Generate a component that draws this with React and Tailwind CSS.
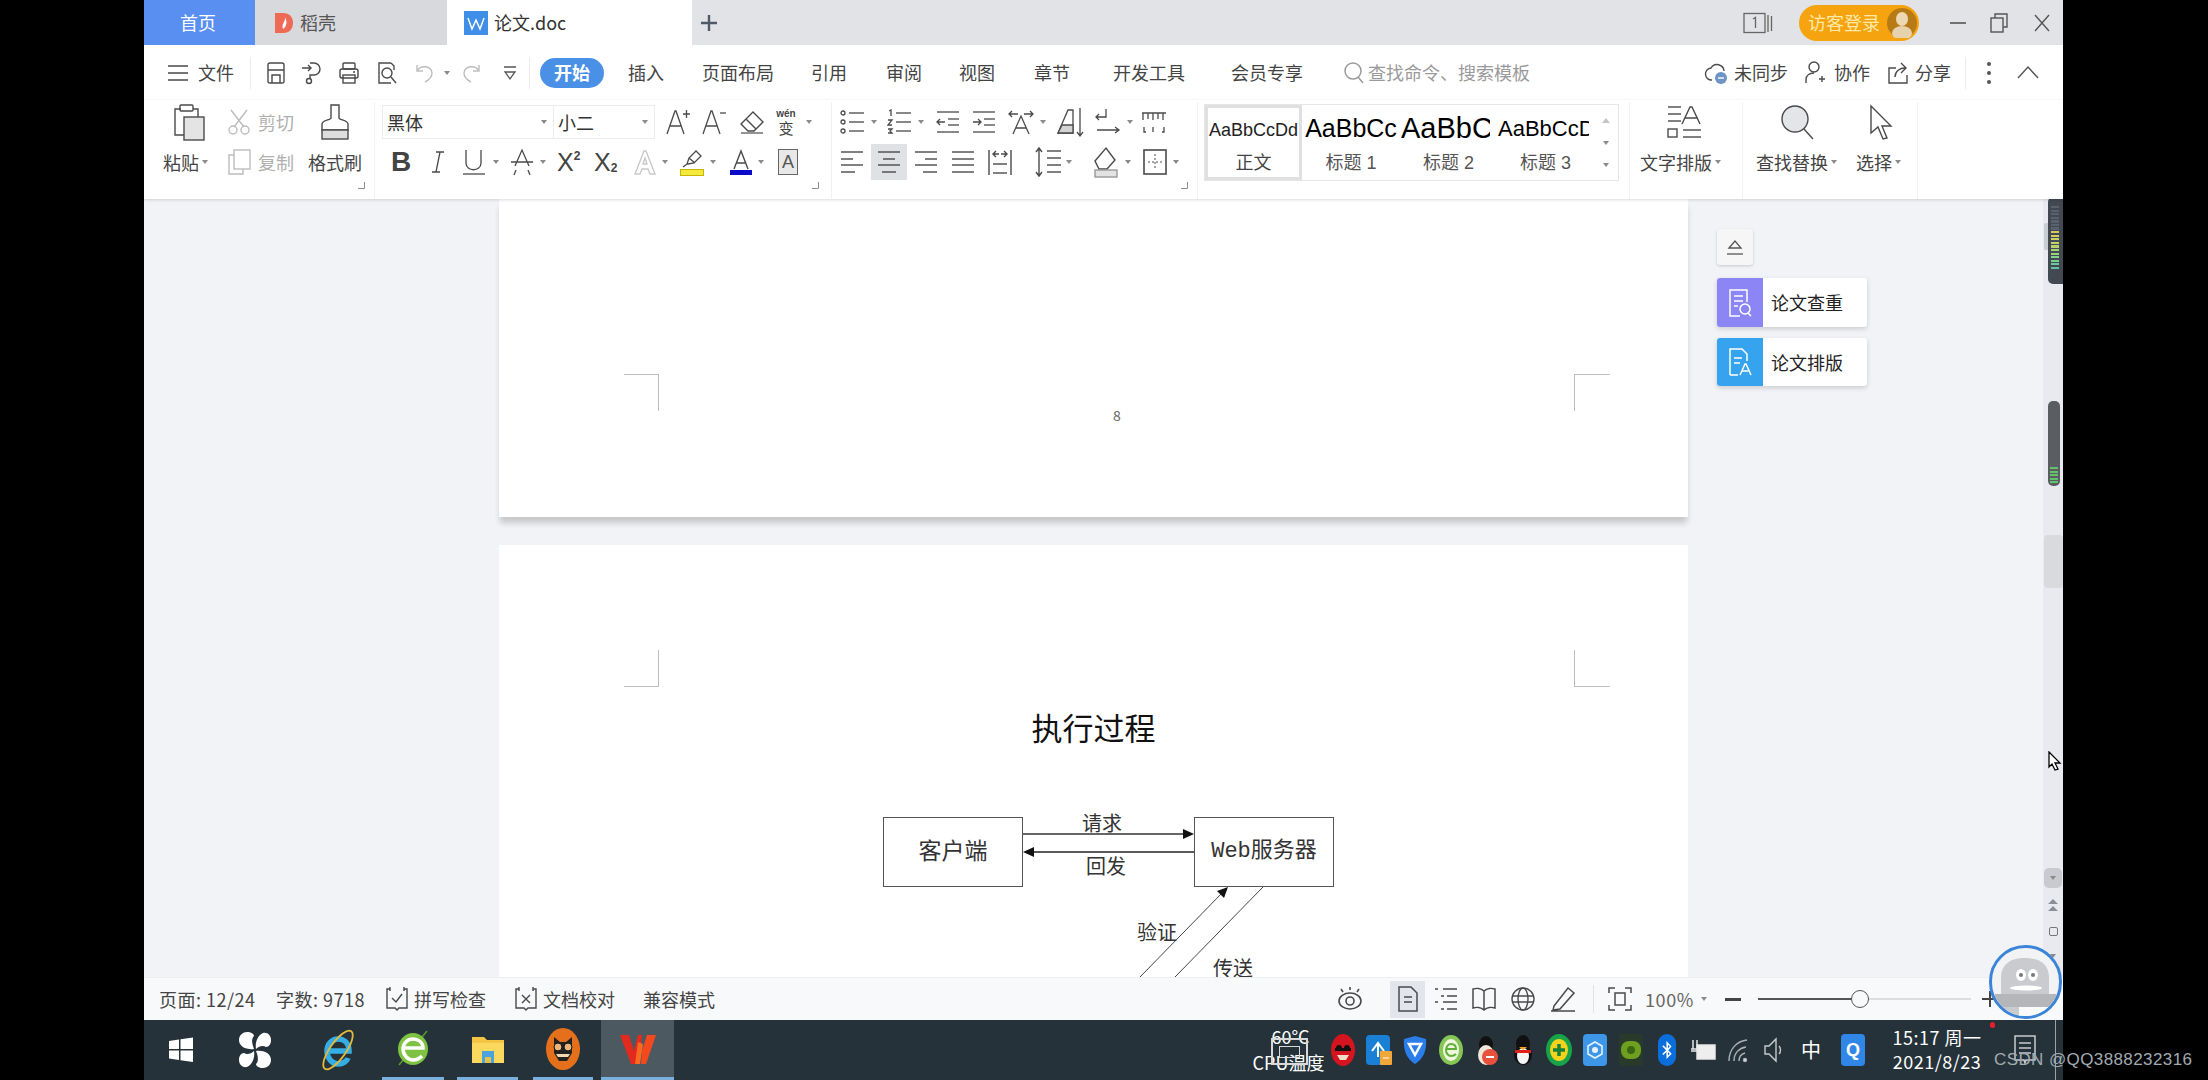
import React from 'react';
import { FaBluetoothB } from 'react-icons/fa';

function S({ w = 24, h = 24, sw = 1.4, stroke = '#4a4a4a', fill = 'none', className = '', children }) {
  return (
    <svg width={w} height={h} viewBox={`0 0 ${w} ${h}`} fill={fill} stroke={stroke} strokeWidth={sw} className={'shrink-0 ' + className}>
      {children}
    </svg>
  );
}
const Caret = ({ className = '' }) => (
  <span className={"h-0 w-0 shrink-0 border-x-[3.5px] border-t-[4px] border-x-transparent border-t-[#8a8a8a] " + className} />
);
const Corner = ({ className = '' }) => (
  <S w={7} h={7} sw={1} stroke="#8f8f8f" className={'absolute ' + className}><path d="M6.5 0v6.5H0" /></S>
);
const Lines = ({ rows }) => <>{rows.map((r, i) => <path key={i} d={r} />)}</>;

const meterTop = ['#59616e', '#59616e', '#59616e', '#59616e', '#59616e', '#59616e', '#59616e'];
const meterLevels = ['#d9c95a', '#d6cc5c', '#cfcf60', '#c6d166', '#b8d16c', '#a8d174', '#98d07e', '#88cf88', '#78cb92', '#6cc69c', '#64c0a4'];
const meterLow = ['#5fc46a', '#5fc46a', '#5fc46a', '#5fc46a', '#5fc46a'];

function App() {
  return (
    <div className="relative flex h-[1080px] w-[2208px] overflow-hidden bg-black font-['Noto_Sans_CJK_SC',sans-serif] text-[18px] text-[#444]">
      <div className="w-[144px] shrink-0" />
      <div className="flex w-[1919px] shrink-0 flex-col">
        {/* tabs */}
        <div className="flex h-[45px] shrink-0 items-center bg-[#e2e3e6]">
          <div className="flex h-full w-[111px] items-center justify-center bg-[#5a8ff2] pr-[3px] text-white">首页</div>
          <div className="flex h-full w-[192px] items-center bg-[#d8d9dc] pl-[19px] text-[#555]">
            <svg width="20" height="22" viewBox="0 0 20 22"><path d="M1 1h8c8 0 10 6 10 10s-2 10-10 10H1z" fill="#ee6a55" /><path d="M11 5c1 4-4 7-2 12 3-2 5-6 2-12z" fill="#fff" /></svg>
            <span className="ml-[6px]">稻壳</span>
          </div>
          <div className="flex h-full w-[245px] items-center bg-white pl-[17px] text-[#333]">
            <svg width="24" height="24" viewBox="0 0 24 24"><rect width="24" height="24" fill="#3f8fe8" /><path d="M4 7l4 11 4-9 4 9 4-11" fill="none" stroke="#fff" strokeWidth="1.5" /></svg>
            <span className="ml-[6px]">论文.doc</span>
          </div>
          <S w={20} h={20} sw={2.4} stroke="#4f5a68" className="ml-[7px]"><path d="M10 2v16M2 10h16" /></S>
          <div className="ml-auto flex items-center pr-[13px]">
            <S w={30} h={22} sw={1.3} stroke="#666"><rect x="1" y="1.5" width="21" height="19" /><path d="M25 3v17M28.5 4v15" /><path d="M10 7l2.5-1.5V16" /></S>
            <div className="ml-[26px] flex h-[36px] w-[120px] items-center rounded-[18px] bg-[#f5a30e] pl-[9px] text-[#ffe9a8]">
              <span className="whitespace-nowrap">访客登录</span>
              <svg width="30" height="30" viewBox="0 0 30 30" className="ml-[7px]"><circle cx="15" cy="15" r="15" fill="#b87a14" /><ellipse cx="15" cy="11" rx="6" ry="7" fill="#ecd9b4" /><ellipse cx="15" cy="25" rx="10" ry="7" fill="#e6d2ac" /></svg>
            </div>
            <S w={16} h={4} sw={1.6} stroke="#555" className="ml-[31px]"><path d="M0 2h16" /></S>
            <S w={18} h={20} sw={1.4} stroke="#555" className="ml-[24px]"><rect x="1" y="5" width="12" height="14" /><path d="M5 5V1h12v13h-4" /></S>
            <S w={16} h={18} sw={1.4} stroke="#555" className="ml-[26px]"><path d="M1 1l14 16M15 1L1 17" /></S>
          </div>
        </div>
        {/* menu row */}
        <div className="flex h-[55px] shrink-0 items-center whitespace-nowrap bg-white">
          <S w={22} h={18} sw={1.6} className="ml-[23px]"><path d="M1 2h20M1 9h20M1 16h20" /></S>
          <span className="ml-[9px] w-[36px]">文件</span>
          <span className="ml-[16px] h-[32px] w-px bg-[#ececec]" />
          <S w={22} h={24} className="ml-[14px]"><path d="M3 4q0-2 2-2h12q2 0 2 2v17q0 1-2 1H5q-2 0-2-1z" /><path d="M7 22v-8h8v8M3 9h16" /></S>
          <S w={22} h={24} className="ml-[14px]"><path d="M1 7h9M7 4l3 3-3 3" /><path d="M9 2h4a6 6 0 0 1 0 12h-4v4" /><circle cx="8" cy="20" r="2.5" /></S>
          <S w={22} h={24} className="ml-[15px]"><rect x="5" y="2" width="12" height="6" rx="1" /><rect x="2" y="8" width="18" height="9" rx="2" /><rect x="5" y="14" width="12" height="8" /><path d="M15 11h2" /></S>
          <S w={22} h={24} className="ml-[16px]"><path d="M15 2H3v20h12" /><path d="M15 2l3 3v4" /><circle cx="11" cy="12" r="5" /><path d="M15 16l5 6" /></S>
          <S w={20} h={22} stroke="#bdbdbd" className="ml-[16px]"><path d="M3 9c3-6 14-6 15 2 0 4-3 7-7 9M3 3v6h6" /></S>
          <Caret className="ml-[10px]" />
          <S w={20} h={22} stroke="#bdbdbd" className="ml-[12px]"><path d="M17 9C14 3 3 3 2 11c0 4 3 7 7 9M17 3v6h-6" /></S>
          <S w={14} h={18} sw={1.3} stroke="#555" className="ml-[21px]"><path d="M1 3h12M2 8h10l-5 7z" /></S>
          <span className="ml-[12px] h-[32px] w-px bg-[#ececec]" />
          <span className="ml-[10px] flex h-[30px] w-[64px] items-center justify-center rounded-[15px] bg-[#4a90e6] font-bold text-white">开始</span>
          <span className="ml-[24px]">插入</span>
          <span className="ml-[38px]">页面布局</span>
          <span className="ml-[37px]">引用</span>
          <span className="ml-[39px]">审阅</span>
          <span className="ml-[37px]">视图</span>
          <span className="ml-[39px]">章节</span>
          <span className="ml-[43px]">开发工具</span>
          <span className="ml-[46px]">会员专享</span>
          <S w={20} h={24} stroke="#9a9a9a" sw={1.5} className="ml-[41px]"><circle cx="9" cy="10" r="8" /><path d="M14 16l5 6" /></S>
          <span className="ml-[4px] w-[162px] text-[#9a9a9a]">查找命令、搜索模板</span>
          <S w={24} h={24} className="ml-[174px]"><path d="M8 19a6 6 0 0 1-1-12 7 7 0 0 1 13 3" /><circle cx="17" cy="17" r="6" fill="#6d94c4" stroke="none" /><path d="M14 17h6" stroke="#fff" /></S>
          <span className="ml-[6px] w-[54px]">未同步</span>
          <S w={20} h={24} className="ml-[17px]"><circle cx="9" cy="6" r="5" /><path d="M1 22v-3c0-5 4-7 8-7M14 18h6M17 15v6" /></S>
          <span className="ml-[9px] w-[36px]">协作</span>
          <S w={22} h={24} className="ml-[17px]"><path d="M9 7H2v15h18v-8" /><path d="M8 16c0-6 5-9 10-9M14 2l5 5-5 5" /></S>
          <span className="ml-[6px] w-[36px]">分享</span>
          <span className="ml-[14px] h-[32px] w-px bg-[#ececec]" />
          <S w={4} h={24} stroke="none" fill="#555" className="ml-[21px]"><circle cx="2" cy="3" r="2" /><circle cx="2" cy="12" r="2" /><circle cx="2" cy="21" r="2" /></S>
          <S w={22} h={13} sw={1.4} stroke="#555" className="ml-[26px]"><path d="M1 12L11 1l10 11" /></S>
        </div>
        {/* toolbar */}
        <div className="z-10 flex h-[99px] shrink-0 whitespace-nowrap bg-white pt-[2px] shadow-[0_1px_3px_rgba(0,0,0,0.15)]">
          {/* clipboard */}
          <div className="relative flex w-[231px] shrink-0 border-r border-[#f1f1f1] pl-[19px]">
            <div className="w-[48px]">
              <div className="flex h-[40px] items-center pl-[9px]">
                <S w={34} h={38} sw={1.4}><path d="M9 6H3v26h9M21 6h5v8" /><rect x="8" y="2" width="13" height="6" rx="1" /><rect x="12" y="14" width="20" height="23" fill="#e4e4e4" /></S>
              </div>
              <div className="flex h-[40px] items-center">粘贴<Caret className="ml-[3px]" /></div>
            </div>
            <div className="ml-[16px] w-[67px] text-[#b0b0b0]">
              <div className="flex h-[40px] items-center">
                <S w={24} h={26} stroke="#bcbcbc"><path d="M4 1l13 17M20 1L7 18" /><circle cx="6" cy="21" r="4" /><circle cx="18" cy="21" r="4" /></S>
                <span className="ml-[7px]">剪切</span>
              </div>
              <div className="flex h-[40px] items-center">
                <S w={24} h={26} stroke="#bcbcbc"><rect x="7" y="1" width="16" height="19" /><path d="M7 6H2v19h14v-5" /></S>
                <span className="ml-[7px]">复制</span>
              </div>
            </div>
            <div className="ml-[14px] w-[54px]">
              <div className="flex h-[40px] items-center justify-center">
                <S w={28} h={36} sw={1.4}><path d="M10 1h8v13c0 2 9 2 9 6v6H1v-6c0-4 9-4 9-6z" /><rect x="1" y="26" width="26" height="9" fill="#dedede" /></S>
              </div>
              <div className="flex h-[40px] items-center">格式刷</div>
            </div>
            <Corner className="bottom-[10px] right-[9px]" />
          </div>
          {/* font */}
          <div className="relative w-[457px] shrink-0 border-r border-[#f1f1f1] pl-[7px]">
            <div className="flex h-[40px] items-center">
              <div className="flex h-[34px] w-[273px] items-center border border-[#ececec] bg-white">
                <div className="flex h-full w-[171px] items-center justify-between border-r border-[#ececec] pl-[4px] pr-[6px] text-[#333]">黑体<Caret /></div>
                <div className="flex h-full flex-1 items-center justify-between pl-[4px] pr-[6px] text-[#333]">小二<Caret /></div>
              </div>
              <S w={26} h={28} sw={1.3} className="ml-[10px]"><path d="M2 26L10 3h1l8 23M5 18h11" /><path d="M18 6h7M21.5 2v8" /></S>
              <S w={26} h={28} sw={1.3} className="ml-[10px]"><path d="M2 26L10 3h1l8 23M5 18h11" /><path d="M19 5h6" /></S>
              <S w={26} h={24} sw={1.4} className="ml-[12px]"><path d="M2 14L14 2l10 10-9 9H9z" /><path d="M7 9l10 10" /><path d="M2 23h22" stroke="#666" /></S>
              <div className="ml-[9px] flex h-[32px] w-[24px] flex-col items-center justify-center">
                <span className="font-['Liberation_Sans',sans-serif] text-[10px] font-bold leading-[10px]">wén</span>
                <span className="mt-[2px] text-[15px] leading-[14px]">变</span>
              </div>
              <Caret className="ml-[8px]" />
            </div>
            <div className="flex h-[40px] items-center">
              <span className="ml-[8px] w-[22px] text-center font-['Liberation_Sans',sans-serif] text-[28px] font-bold">B</span>
              <S w={14} h={24} sw={1.3} className="ml-[19px]"><path d="M5 2h8M1 22h8M9 2L5 22" /></S>
              <S w={22} h={28} sw={1.3} className="ml-[18px]"><path d="M3 2v13c0 9 15 9 15 0V2" /><path d="M0 26h22" /></S>
              <Caret className="ml-[8px]" />
              <S w={24} h={28} sw={1.3} className="ml-[11px]"><path d="M5 18L12 2l7 16M1 14h22M4 27l2-5M20 27l-2-5" /></S>
              <Caret className="ml-[6px]" />
              <span className="ml-[11px] flex w-[26px] items-start font-['Liberation_Sans',sans-serif] text-[25px] font-light leading-[26px]">X<span className="text-[12px] font-bold leading-[14px]">2</span></span>
              <span className="ml-[11px] flex w-[26px] items-end font-['Liberation_Sans',sans-serif] text-[25px] font-light leading-[26px]">X<span className="text-[12px] font-bold leading-[14px]">2</span></span>
              <S w={24} h={26} sw={1.4} stroke="#c9c9c9" className="ml-[13px]"><path d="M2 25L11 2h2l9 23h-5l-2-5H9l-2 5zM10 15h4l-2-6z" /></S>
              <Caret className="ml-[5px]" />
              <div className="ml-[12px] flex w-[24px] flex-col items-center">
                <S w={22} h={20} sw={1.3}><path d="M6 15l2-6L15 2l5 5-7 7-6 1zM8 9l6 5M2 18l4-3" /></S>
                <span className="h-[7px] w-[24px] border border-[#c8b400] bg-[#f3ea3d]" />
              </div>
              <Caret className="ml-[6px]" />
              <div className="ml-[14px] flex w-[22px] flex-col items-center">
                <S w={20} h={21} sw={1.4}><path d="M3 20L10 2l7 18M5 14h10" /></S>
                <span className="h-[5px] w-[22px] bg-[#0a0ac8]" />
              </div>
              <Caret className="ml-[6px]" />
              <div className="ml-[14px] flex h-[26px] w-[20px] items-center justify-center border border-[#666] bg-[#e8e8e8] font-['Liberation_Sans',sans-serif] text-[18px] leading-none text-[#555]">A</div>
            </div>
            <Corner className="bottom-[10px] right-[12px]" />
          </div>
          {/* paragraph */}
          <div className="relative w-[366px] shrink-0 border-r border-[#f1f1f1]">
            <div className="flex h-[40px] items-center">
              <S w={24} h={26} sw={1.3} className="ml-[8px]"><Lines rows={['M9 4h15', 'M9 13h15', 'M9 22h15']} /><circle cx="3" cy="4" r="2" /><circle cx="3" cy="13" r="2" /><circle cx="3" cy="22" r="2" /></S>
              <Caret className="ml-[7px]" />
              <S w={24} h={26} sw={1.3} className="ml-[10px]"><Lines rows={['M9 4h15', 'M9 13h15', 'M9 22h15', 'M2 2l2-1v6', 'M1 11h4l-4 5h4', 'M1 20h4l-2 2 2 2H1']} /></S>
              <Caret className="ml-[7px]" />
              <S w={24} h={26} sw={1.3} className="ml-[12px]"><Lines rows={['M1 3h22', 'M12 10h11', 'M12 16h11', 'M1 23h22', 'M1 13h8M4 10l-3 3 3 3']} /></S>
              <S w={24} h={26} sw={1.3} className="ml-[12px]"><Lines rows={['M1 3h22', 'M12 10h11', 'M12 16h11', 'M1 23h22', 'M1 13h8M6 10l3 3-3 3']} /></S>
              <S w={26} h={28} sw={1.3} className="ml-[12px]"><Lines rows={['M1 6h9M4 3L1 6l3 3', 'M16 6h9M22 3l3 3-3 3', 'M5 26l8-18 8 18M8 20h10']} /></S>
              <Caret className="ml-[6px]" />
              <S w={28} h={32} sw={1.3} className="ml-[10px]"><path d="M2 27L12 4h5v23H2z" /><path d="M2 27l4-8h11v8z" fill="#d3d3d3" /><path d="M24 2v28M21 26l3 4 3-4" /></S>
              <S w={26} h={28} sw={1.3} className="ml-[11px]"><Lines rows={['M11 1v8H1M4 6L1 9l3 3', 'M2 22h21M20 19l4 3-4 3']} /></S>
              <Caret className="ml-[6px]" />
              <S w={26} h={26} sw={1.3} className="ml-[8px]"><Lines rows={['M1 4h24M2 4v7M7 4v6M12 4v7M17 4v6M22 4v7', 'M3 18v5h2M12 18v5M23 18v5h-2']} /></S>
            </div>
            <div className="flex h-[40px] items-center">
              <S w={24} h={26} sw={1.4} className="ml-[8px]"><Lines rows={['M1 3h22', 'M1 10h12', 'M1 16h22', 'M1 23h14']} /></S>
              <div className="ml-[7px] flex h-[36px] w-[36px] items-center justify-center bg-[#dfe1e5]">
                <S w={24} h={26} sw={1.4}><Lines rows={['M1 3h22', 'M6 10h12', 'M1 16h22', 'M5 23h14']} /></S>
              </div>
              <S w={24} h={26} sw={1.4} className="ml-[7px]"><Lines rows={['M1 3h22', 'M11 10h12', 'M1 16h22', 'M9 23h14']} /></S>
              <S w={24} h={26} sw={1.4} className="ml-[13px]"><Lines rows={['M1 3h22', 'M1 10h22', 'M1 16h22', 'M1 23h22']} /></S>
              <S w={24} h={28} sw={1.4} className="ml-[13px]"><Lines rows={['M1 2v25M23 2v25', 'M5 16h14', 'M5 25h14', 'M5 6h6M8 3L5 6l3 3', 'M13 6h6M16 3l3 3-3 3']} /></S>
              <S w={26} h={32} sw={1.4} className="ml-[23px]"><Lines rows={['M4 2v28M1 6l3-4 3 4M1 26l3 4 3-4', 'M12 5h14', 'M12 12h14', 'M12 19h14', 'M12 26h14']} /></S>
              <Caret className="ml-[5px]" />
              <S w={26} h={32} sw={1.4} className="ml-[21px]"><path d="M2 15L13 2l9 12-8 9H6z" /><rect x="2" y="24" width="22" height="7" fill="#e2e2e2" stroke="#999" /></S>
              <Caret className="ml-[6px]" />
              <S w={24} h={28} sw={1.6} className="ml-[12px]"><rect x="1" y="2" width="22" height="24" /><path d="M12 6v16M5 14h14" strokeDasharray="2 2" strokeWidth="1" /></S>
              <Caret className="ml-[6px]" />
            </div>
            <Corner className="bottom-[10px] right-[9px]" />
          </div>
          {/* gallery */}
          <div className="ml-[6px] mt-[2px] flex h-[77px] w-[415px] shrink-0 border border-[#e6e6e6] font-['Liberation_Sans','Noto_Sans_CJK_SC',sans-serif]">
            <div className="flex h-full w-[97px] flex-col items-center border-[3px] border-[#e0e0e0] text-[#222]">
              <div className="flex h-[42px] w-full items-center justify-center overflow-hidden pt-[3px] text-[18px]">AaBbCcDd</div>
              <div className="text-[#444]">正文</div>
            </div>
            <div className="flex h-full w-[98px] flex-col items-center">
              <div className="flex h-[45px] w-full items-center justify-center overflow-hidden pt-[2px] text-[25px] text-black">AaBbCc</div>
              <div className="text-[#555]">标题 1</div>
            </div>
            <div className="flex h-full w-[97px] flex-col items-center">
              <div className="flex h-[45px] w-[90px] items-center self-start overflow-hidden pl-[1px] pt-[2px] text-[29px] text-black">AaBbCc</div>
              <div className="text-[#555]">标题 2</div>
            </div>
            <div className="flex h-full w-[97px] flex-col items-center">
              <div className="flex h-[45px] w-[92px] items-center self-start overflow-hidden pl-[1px] pt-[2px] text-[22px] text-black">AaBbCcDd</div>
              <div className="text-[#555]">标题 3</div>
            </div>
            <div className="flex flex-1 flex-col items-center justify-around py-[4px]">
              <span className="h-0 w-0 border-x-[4px] border-b-[5px] border-x-transparent border-b-[#c4c4c4]" />
              <Caret />
              <Caret />
            </div>
          </div>
          {/* text layout */}
          <div className="ml-[10px] w-[114px] shrink-0 border-x border-[#f1f1f1]">
            <div className="flex h-[40px] items-center pl-[37px]">
              <S w={36} h={34} sw={1.4}><Lines rows={['M1 2h13', 'M1 9h13', 'M1 16h13', 'M15 19L23 2h2l8 17M18 13h12', 'M16 25h18', 'M16 32h18']} /><rect x="1" y="24" width="9" height="8" /></S>
            </div>
            <div className="flex h-[40px] items-center pl-[10px]">文字排版<Caret className="ml-[3px]" /></div>
          </div>
          <div className="w-[102px] shrink-0">
            <div className="flex h-[40px] items-center pl-[37px]">
              <S w={36} h={36} sw={1.4}><circle cx="15" cy="15" r="13" fill="#e4e5e8" /><path d="M24 25l9 10" /></S>
            </div>
            <div className="flex h-[40px] items-center pl-[13px]">查找替换<Caret className="ml-[3px]" /></div>
          </div>
          <div className="w-[73px] shrink-0 border-r border-[#f1f1f1]">
            <div className="flex h-[40px] items-center pl-[24px]">
              <S w={24} h={36} sw={1.4}><path d="M2 2l20 20h-9l5 12-4 1-5-12-7 6z" /></S>
            </div>
            <div className="flex h-[40px] items-center pl-[11px]">选择<Caret className="ml-[3px]" /></div>
          </div>
        </div>
        {/* document */}
        <div className="flex min-h-0 flex-1 overflow-hidden bg-[#f2f3f6]">
          <div className="w-[355px] shrink-0" />
          <div className="flex w-[1189px] shrink-0 flex-col gap-[28px]">
            <div className="relative h-[318px] shrink-0 bg-white shadow-[0_7px_6px_-1px_rgba(0,0,0,0.18)]">
              <div className="absolute left-[125px] top-[175px] h-[37px] w-[35px] border-r border-t border-[#bdbdbd]" />
              <div className="absolute left-[1075px] top-[175px] h-[37px] w-[36px] border-l border-t border-[#bdbdbd]" />
              <div className="absolute left-[614px] top-[205px] text-[14px] leading-[22px] text-[#666]">8</div>
            </div>
            <div className="relative min-h-0 flex-1 overflow-hidden bg-white pt-[159px]">
              <div className="absolute left-[125px] top-[105px] h-[37px] w-[35px] border-b border-r border-[#bdbdbd]" />
              <div className="absolute left-[1075px] top-[105px] h-[37px] w-[36px] border-b border-l border-[#bdbdbd]" />
              <div className="text-center text-[31px] leading-[46px] text-[#111]">执行过程</div>
              <div className="relative mt-[50px] h-[177px] text-[#333]">
                <svg width="1189" height="177" viewBox="0 0 1189 177" className="absolute left-0 top-0">
                  <path d="M524 34h161" stroke="#666" strokeWidth="2" />
                  <path d="M695 34l-11-5v10z" fill="#111" />
                  <path d="M695 52H535" stroke="#222" strokeWidth="1.3" />
                  <path d="M524 52l11-5v10z" fill="#111" />
                  <path d="M641 177l83-85" stroke="#444" strokeWidth="1" />
                  <path d="M729 87l-11 4 7 7z" fill="#111" />
                  <path d="M676 177l88-90" stroke="#444" strokeWidth="1" />
                </svg>
                <div className="absolute left-[384px] top-[17px] flex h-[70px] w-[140px] items-center justify-center border border-[#555] pb-[5px] text-[23px]">客户端</div>
                <div className="absolute left-[695px] top-[17px] flex h-[70px] w-[140px] items-center justify-center border border-[#555] pb-[1px] font-['Liberation_Mono','Noto_Sans_CJK_SC',monospace] text-[22px]">Web服务器</div>
                <div className="absolute left-[583px] top-[10px] text-[20px] leading-[26px]">请求</div>
                <div className="absolute left-[587px] top-[53px] text-[20px] leading-[26px]">回发</div>
                <div className="absolute left-[638px] top-[119px] text-[20px] leading-[26px]">验证</div>
                <div className="absolute left-[714px] top-[155px] text-[20px] leading-[26px]">传送</div>
              </div>
            </div>
          </div>
          {/* right panel */}
          <div className="w-[355px] shrink-0 pl-[29px] pt-[30px]">
            <div className="flex h-[36px] w-[36px] items-center justify-center rounded-[3px] bg-[#f6f6f7] shadow-[0_1px_3px_rgba(0,0,0,0.18)]">
              <S w={18} h={18} sw={1.3} stroke="#555"><path d="M3 10l6-7 6 7z" /><path d="M1 16h16" /></S>
            </div>
            <div className="mt-[13px] flex h-[49px] w-[150px] overflow-hidden rounded-[3px] bg-white shadow-[0_2px_5px_rgba(0,0,0,0.16)]">
              <div className="flex w-[46px] items-center justify-center bg-[#8c85f6]">
                <S w={26} h={30} sw={1.5} stroke="#fff"><path d="M20 14V2H3v26h10" /><path d="M7 8h9M7 13h9M7 18h4" /><circle cx="18" cy="21" r="5" /><path d="M21 25l3 3" /></S>
              </div>
              <span className="ml-[8px] flex items-center text-[#222]">论文查重</span>
            </div>
            <div className="mt-[11px] flex h-[48px] w-[150px] overflow-hidden rounded-[3px] bg-white shadow-[0_2px_5px_rgba(0,0,0,0.16)]">
              <div className="flex w-[46px] items-center justify-center bg-[#35a3ee]">
                <S w={26} h={30} sw={1.5} stroke="#fff"><path d="M3 28V2h12l5 5v7M3 28h8" /><path d="M7 11h8M7 16h6" /><path d="M13 28l5-11h1l5 11M15 24h8" /></S>
              </div>
              <span className="ml-[8px] flex items-center text-[#222]">论文排版</span>
            </div>
          </div>
          {/* scrollbar */}
          <div className="flex w-[20px] shrink-0 flex-col items-center bg-[#e9eaef]">
            <div className="mt-[336px] h-[53px] w-[19px] rounded-[4px] bg-[#d9dade]" />
            <div className="mt-[280px] flex h-[20px] w-[18px] items-center justify-center rounded-[5px] bg-[#c9cacf]"><Caret /></div>
            <S w={10} h={12} stroke="none" fill="#8a8f96" className="mt-[11px]"><path d="M5 0l5 5H0zM5 7l5 5H0z" /></S>
            <span className="mt-[16px] h-[9px] w-[9px] rounded-[2px] border border-[#777]" />
            <Caret className="mt-[18px]" />
          </div>
        </div>
        {/* status */}
        <div className="flex h-[43px] shrink-0 items-center whitespace-nowrap border-t border-[#eceef1] bg-[#f8f9fb]">
          <span className="ml-[15px] w-[97px] tracking-[0.5px]">页面: 12/24</span>
          <span className="ml-[20px] w-[90px] tracking-[0.5px]">字数: 9718</span>
          <S w={22} h={26} className="ml-[20px]"><path d="M4 3H1v19h8l2 2 2-2h8V3h-3M4 1v4M18 1v4" /><path d="M6 12l4 4 6-8" /></S>
          <span className="ml-[6px] w-[72px]">拼写检查</span>
          <S w={22} h={26} className="ml-[29px]"><path d="M4 3H1v19h8l2 2 2-2h8V3h-3M4 1v4M18 1v4" /><path d="M7 9l8 8M15 9l-8 8" /></S>
          <span className="ml-[6px] w-[72px]">文档校对</span>
          <span className="ml-[28px] w-[72px]">兼容模式</span>
          <S w={26} h={26} sw={1.6} className="ml-[622px]"><ellipse cx="13" cy="15" rx="11" ry="8" /><circle cx="13" cy="15" r="4" /><path d="M13 1v3M4 3l2 3M22 3l-2 3" /></S>
          <div className="ml-[27px] flex h-[37px] w-[35px] items-center justify-center bg-[#e2e5ec]">
            <S w={22} h={26} sw={1.5}><path d="M2 1h12l6 6v18H2z" /><path d="M7 11h8M7 16h8" /></S>
          </div>
          <S w={26} h={26} sw={1.5} className="ml-[8px]"><Lines rows={['M2 3h3M10 3h14', 'M8 10h3M14 10h10', 'M2 16h3M10 16h14', 'M8 23h3M14 23h10']} /></S>
          <S w={26} h={26} sw={1.5} className="ml-[12px]"><path d="M13 5C10 2 5 2 2 3v19c3-1 8-1 11 2 3-3 8-3 11-2V3c-3-1-8-1-11 2zM13 5v19" /></S>
          <S w={26} h={26} sw={1.4} className="ml-[13px]"><circle cx="13" cy="13" r="11" /><ellipse cx="13" cy="13" rx="5" ry="11" /><path d="M2 10h22M2 16h22" /></S>
          <S w={26} h={26} sw={1.5} className="ml-[14px]"><path d="M4 20L18 2l6 5-14 16-7 1zM1 25h24" /></S>
          <span className="ml-[17px] h-[28px] w-px bg-[#e2e2e2]" />
          <S w={24} h={26} sw={1.5} className="ml-[14px]"><path d="M1 7V2h6M17 2h6v5M1 19v5h6M17 24h6v-5" /><rect x="7" y="7" width="10" height="12" /></S>
          <span className="ml-[13px] w-[50px] tracking-[0.6px] text-[#666]">100%</span>
          <Caret className="ml-[6px]" />
          <span className="ml-[18px] h-[3px] w-[16px] bg-[#444]" />
          <div className="relative ml-[17px] flex h-[2px] w-[213px] bg-[#dcdde0]">
            <div className="h-full w-[102px] bg-[#555]" />
            <div className="absolute left-[93px] top-[-8px] h-[18px] w-[18px] rounded-full border border-[#555] bg-[#f8f9fb]" />
          </div>
          <S w={16} h={16} sw={2} stroke="#444" className="ml-[11px]"><path d="M0 8h16M8 0v16" /></S>
        </div>
        {/* taskbar */}
        <div className="flex h-[60px] shrink-0 items-center whitespace-nowrap bg-[#25323a] text-white">
          <div className="flex h-full w-[73px] items-center justify-center">
            <svg width="26" height="26" viewBox="0 0 26 26" fill="#fff"><path d="M1 4l10-1.5V12H1zM12.5 2.3L25 .5V12H12.5zM1 13.5h10V23L1 21.6zM12.5 13.5H25V25l-12.5-1.8z" /></svg>
          </div>
          <div className="flex h-full w-[76px] items-center justify-center">
            <svg width="34" height="38" viewBox="0 0 34 38"><path d="M16 18C9 19 1 16 1 9c0-5 4-8 8-8 4 0 7 2 7 4-3 3-2 8 0 13zM18 18c-1-6 1-13 7-16 5-1 8 3 8 7 0 4-2 7-5 7-3-2-7-1-10 2zM18 20c7-1 15 2 15 9 0 5-4 8-8 8-4 0-7-2-7-4 3-3 2-8 0-13zM16 20c1 6-1 13-7 16-5 1-8-3-8-7 0-4 2-7 5-7 3 2 7 1 10-2z" fill="#fff" /></svg>
          </div>
          <div className="ml-[8px] flex h-full w-[74px] items-center justify-center">
            <svg width="36" height="44" viewBox="0 0 36 44"><path d="M8 23h21c0-8-5-12-11-12S7 16 7 23s5 13 11 13c5 0 9-3 10-6" fill="none" stroke="#35aee6" strokeWidth="5.5" /><ellipse cx="18" cy="22" rx="23" ry="8" transform="rotate(-55 18 22)" fill="none" stroke="#e3bb3a" strokeWidth="1.8" /></svg>
          </div>
          <div className="flex h-full w-[75px] flex-col items-center">
            <div className="flex flex-1 items-center">
              <svg width="34" height="40" viewBox="0 0 34 40"><path d="M3 36L31 2" stroke="#5a9b2c" strokeWidth="1.5" /><ellipse cx="17" cy="20" rx="15" ry="16" fill="#7fc241" /><path d="M7 19h20c0-6-5-9-10-9s-10 4-10 10 5 11 10 11c4 0 7-2 9-4" fill="none" stroke="#fff" strokeWidth="3.5" /></svg>
            </div>
            <span className="h-[3px] w-[62px] bg-[#7ab0dd]" />
          </div>
          <div className="flex h-full w-[75px] flex-col items-center">
            <div className="flex flex-1 items-center">
              <svg width="32" height="28" viewBox="0 0 32 28"><path d="M0 2h12l3 3h17v23H0z" fill="#f4c542" /><path d="M0 8h32v20H0z" fill="#fbd95e" /><path d="M10 16h12v12H10z" fill="#4aa3df" /><path d="M13 22h6v6h-6z" fill="#e8c246" /></svg>
            </div>
            <span className="h-[3px] w-[61px] bg-[#7ab0dd]" />
          </div>
          <div className="flex h-full w-[75px] flex-col items-center">
            <div className="flex flex-1 items-center">
              <svg width="36" height="44" viewBox="0 0 36 44"><ellipse cx="18" cy="22" rx="17" ry="21" fill="#e5701c" /><path d="M9 10l6 5h6l6-5v16l-5 8H14l-5-8z" fill="#222" /><circle cx="13" cy="20" r="4" fill="#e9b57c" stroke="#111" /><circle cx="23" cy="20" r="4" fill="#e9b57c" stroke="#111" /><path d="M11 27h14l-2 3H13z" fill="#f0d9b0" /></svg>
            </div>
            <span className="h-[3px] w-[60px] bg-[#7ab0dd]" />
          </div>
          <div className="ml-px flex h-full w-[73px] flex-col items-center bg-[#4d5961]">
            <div className="flex flex-1 items-center">
              <svg width="36" height="30" viewBox="0 0 36 30"><path d="M0 1h9l5 16 4-16h4l-3 29h-8z" fill="#e32a1e" /><path d="M36 1h-9l-5 16-1 13h5z" fill="#f4481e" /><path d="M18 8l-3 22h5l3-20z" fill="#fa6a1e" /></svg>
            </div>
            <span className="h-[3px] w-full bg-[#7ab0dd]" />
          </div>
          <div className="relative ml-[578px] flex h-full w-[73px] flex-col items-center justify-center pb-[3px] text-[18px] leading-[26px]">
            <span className="pl-[4px]">60°C</span>
            <span>CPU温度</span>
            <div className="absolute left-[19px] top-[18px] h-[27px] w-[37px] border-2 border-[#d8d8d8]"><div className="mx-[6px] mt-[6px] h-[12px] border border-[#d8d8d8]" /></div>
          </div>
          <div className="flex w-[36px] justify-center">
            <svg width="24" height="32" viewBox="0 0 24 32"><ellipse cx="12" cy="16" rx="12" ry="16" fill="#d4151f" /><path d="M4 14h16v3H4z" fill="#111" /><circle cx="8" cy="14" r="3" fill="#111" /><circle cx="16" cy="14" r="3" fill="#111" /><path d="M6 21h12l-3 5H9z" fill="#f3dcc5" /></svg>
          </div>
          <div className="flex w-[36px] justify-center">
            <svg width="26" height="30" viewBox="0 0 26 30"><rect width="24" height="30" rx="4" fill="#1a80d6" /><path d="M6 16l6-8 6 8M12 8v14" stroke="#fff" strokeWidth="2" fill="none" /><rect x="14" y="16" width="12" height="14" rx="1" fill="#f2a73a" /><path d="M17 23h6" stroke="#fff" /></svg>
          </div>
          <div className="flex w-[36px] justify-center">
            <svg width="24" height="30" viewBox="0 0 24 30"><path d="M12 1l11 3c1 12-3 20-11 25C4 24 0 16 1 4z" fill="#2b7de9" /><path d="M6 9h12l-6 11z" fill="none" stroke="#fff" strokeWidth="2.5" /></svg>
          </div>
          <div className="flex w-[36px] justify-center">
            <svg width="24" height="32" viewBox="0 0 24 32"><ellipse cx="12" cy="16" rx="12" ry="15" fill="#86c654" /><ellipse cx="12" cy="16" rx="8" ry="11" fill="#eef6e0" /><path d="M7 15h10c0-3-2-5-5-5s-5 3-5 6 2 6 5 6c2 0 4-1 5-2" fill="none" stroke="#5fae35" strokeWidth="2" /></svg>
          </div>
          <div className="flex w-[36px] justify-center">
            <svg width="22" height="32" viewBox="0 0 22 32"><ellipse cx="10" cy="11" rx="7" ry="9" fill="#111" /><ellipse cx="10" cy="21" rx="8" ry="10" fill="#f1e6dc" /><circle cx="14" cy="23" r="8" fill="#e8513c" /><path d="M10 23h8" stroke="#fff" strokeWidth="2" /></svg>
          </div>
          <div className="flex w-[36px] justify-center">
            <svg width="22" height="32" viewBox="0 0 22 32"><ellipse cx="11" cy="10" rx="7" ry="9" fill="#111" /><ellipse cx="11" cy="21" rx="9" ry="10" fill="#111" /><ellipse cx="11" cy="22" rx="6" ry="8" fill="#f6f6f6" /><path d="M7 13h8l-4 3z" fill="#f2a51a" /><path d="M3 16h16v3H3z" fill="#e0211c" /></svg>
          </div>
          <div className="flex w-[36px] justify-center">
            <svg width="26" height="32" viewBox="0 0 26 32"><ellipse cx="13" cy="16" rx="13" ry="16" fill="#17a34a" /><ellipse cx="13" cy="16" rx="9" ry="11" fill="#f3d21c" /><path d="M13 10v12M7 16h12" stroke="#17803a" strokeWidth="3.5" /></svg>
          </div>
          <div className="flex w-[36px] justify-center">
            <svg width="24" height="32" viewBox="0 0 24 32"><rect width="24" height="32" rx="4" fill="#3d96e8" /><path d="M12 8l7 4v8l-7 4-7-4v-8z" fill="none" stroke="#e6f2fd" strokeWidth="1.6" /><circle cx="12" cy="16" r="3" fill="#e6f2fd" /></svg>
          </div>
          <div className="flex w-[36px] justify-center">
            <svg width="24" height="32" viewBox="0 0 24 32"><rect width="24" height="32" rx="2" fill="#2a3a2a" /><rect x="2" y="7" width="20" height="18" rx="8" fill="#6d9f20" /><circle cx="12" cy="16" r="4" fill="#3d6610" /></svg>
          </div>
          <div className="flex w-[36px] justify-center">
            <div className="flex h-[32px] w-[18px] items-center justify-center rounded-[9px] bg-[#0a6fdc]"><FaBluetoothB className="text-[18px] text-white" /></div>
          </div>
          <div className="flex w-[36px] justify-center">
            <S w={26} h={26} sw={1.5} stroke="#e8e8e8"><rect x="7" y="8" width="18" height="14" fill="#eee" /><path d="M1 14h6M3 3v9M7 3v9M1 12h8" /></S>
          </div>
          <div className="flex w-[36px] justify-center">
            <S w={24} h={26} sw={1.4} stroke="#a9b2b8"><path d="M2 24C2 12 10 4 20 3M7 24c0-8 5-13 12-14M12 24c0-4 2-7 6-8" /><circle cx="18" cy="23" r="1.5" fill="#fff" /></S>
          </div>
          <div className="flex w-[36px] justify-center">
            <S w={22} h={26} sw={1.4} stroke="#c6ccd0"><path d="M1 9h4l7-7v22l-7-7H1zM15 9c2 2 2 6 0 8" /></S>
          </div>
          <div className="flex w-[36px] justify-center text-[20px]">中</div>
          <div className="ml-[6px] flex w-[36px] justify-center">
            <div className="flex h-[32px] w-[24px] items-center justify-center rounded-[4px] bg-[#3187e8] font-['Liberation_Sans',sans-serif] text-[18px] font-bold">Q</div>
          </div>
          <div className="ml-[21px] flex w-[90px] flex-col items-center pb-[3px] text-[18px] leading-[24px] tracking-[0.5px]">
            <span>15:17 周一</span>
            <span>2021/8/23</span>
          </div>
          <S w={24} h={30} sw={1.5} stroke="#c8ccd0" className="ml-[31px]"><path d="M2 1h20v24H13l-1 3-1-3H2z" /><path d="M6 8h12M6 13h12M6 18h12" /></S>
          <span className="ml-[18px] h-full w-px bg-[#9aa2a8]" />
        </div>
      </div>
      {/* overlays */}
      <span className="absolute left-[2044px] top-[223px] h-[27px] w-[4px] rounded-l-[2px] bg-[#c9ccd2]" />
      <div className="absolute left-[2048px] top-[197px] flex h-[87px] w-[15px] flex-col items-center gap-[1.4px] rounded-l-[5px] bg-[#434953] pr-[1px] pt-[9px]">
        {meterTop.concat(meterLevels).map((c, i) => (
          <span key={i} className="h-[2.2px] w-[8px] shrink-0" style={{ backgroundColor: c }} />
        ))}
      </div>
      <div className="absolute left-[2048px] top-[401px] flex h-[85px] w-[12px] flex-col items-center justify-end gap-[1.4px] rounded-[5px] bg-[#5a5d62] pb-[3px]">
        {meterLow.map((c, i) => (
          <span key={i} className="h-[2px] w-[8px] shrink-0" style={{ backgroundColor: c }} />
        ))}
      </div>
      <svg width="14" height="20" viewBox="0 0 14 20" className="absolute left-[2048px] top-[751px]"><path d="M1 1l11 11H7l3 6-3 1-3-6-3 3z" fill="#fff" stroke="#000" strokeWidth="1.3" /></svg>
      <div className="absolute left-[1989px] top-[945px] h-[74px] w-[73px] overflow-hidden rounded-full border-[3px] border-[#3b84d8] bg-[#f1f3f5]">
        <svg width="68" height="68" viewBox="0 0 68 68"><path d="M9 46V30C9 15 20 10 33 10s24 5 24 20v16z" fill="#c9cbce" /><ellipse cx="29" cy="27" rx="5" ry="6" fill="#fff" /><ellipse cx="41" cy="27" rx="5" ry="6" fill="#fff" /><circle cx="29" cy="27" r="2" fill="#777" /><circle cx="41" cy="27" r="2" fill="#777" /><ellipse cx="34" cy="40" rx="16" ry="2.5" fill="#fff" /><rect x="3" y="46" width="62" height="13" fill="#b4b6ba" /><rect x="9" y="59" width="18" height="9" fill="#c9cbce" /><rect x="27" y="59" width="36" height="9" fill="#fafafa" /></svg>
      </div>
      <span className="absolute left-[1990px] top-[1022px] h-[6px] w-[5px] rounded-full bg-[#e5202a]" />
      <span className="absolute left-[1994px] top-[1048px] whitespace-nowrap font-['Liberation_Sans',sans-serif] text-[17px] leading-[24px] tracking-[0.4px] text-[#a2abb0]">CSDN @QQ3888232316</span>
    </div>
  );
}
export default App;
